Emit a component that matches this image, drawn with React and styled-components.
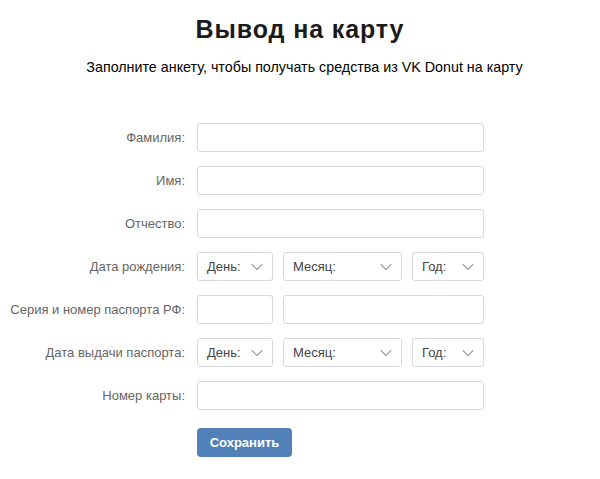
import React from "react";
import styled, { createGlobalStyle } from "styled-components";

const Global = createGlobalStyle`
  html, body { margin: 0; padding: 0; background: #fff; }
  body { font-family: "Liberation Sans", Arial, sans-serif; color: #000; }
  * { box-sizing: border-box; }
`;

const Page = styled.div`
  width: 600px;
  height: 479px;
  display: flex;
  flex-direction: column;
  align-items: center;
  padding-top: 14px;
`;

const Title = styled.h1`
  margin: 0;
  font-size: 25px;
  letter-spacing: 0.9px;
  font-weight: 700;
  line-height: 30px;
  color: #1a1a1a;
`;

const Subtitle = styled.p`
  margin: 14px 0 0 9px;
  font-size: 14.3px;
  line-height: 18px;
  color: #000;
`;

const Form = styled.div`
  margin-top: 47px;
  align-self: stretch;
  display: grid;
  grid-template-columns: 185px 287px;
  column-gap: 12px;
  row-gap: 14px;
  align-items: center;
`;

const Label = styled.div`
  text-align: right;
  font-size: 13px;
  color: #656565;
`;

const Fields = styled.div`
  display: flex;
  gap: ${(p) => p.$gap || 10}px;
`;

const Input = styled.div`
  width: ${(p) => (p.$w ? `${p.$w}px` : "100%")};
  height: 29px;
  border: 1px solid #d6dade;
  border-radius: 3px;
  background: #fff;
`;

const Select = styled.div`
  width: ${(p) => p.$w}px;
  height: 29px;
  border: 1px solid #d6dade;
  border-radius: 3px;
  display: flex;
  align-items: center;
  justify-content: space-between;
  padding: 0 9px 0 9px;
  font-size: 13px;
  color: #444;
`;

const Chevron = () => (
  <svg width="12" height="8" viewBox="0 0 12 8" fill="none">
    <path d="M1 1.5l5 5 5-5" stroke="#99a0a8" strokeWidth="1.1" strokeLinecap="round" strokeLinejoin="round" />
  </svg>
);

const Button = styled.button`
  grid-column: 2;
  justify-self: start;
  margin-top: 4px;
  width: 95px;
  height: 29px;
  border: none;
  border-radius: 4px;
  background: #5181b8;
  color: #fff;
  font-family: "Liberation Sans", Arial, sans-serif;
  font-size: 13px;
  font-weight: 700;
  padding: 0;
`;

const DateFields = () => (
  <Fields $gap={10}>
    <Select $w={76}>День: <Chevron /></Select>
    <Select $w={119}>Месяц: <Chevron /></Select>
    <Select $w={72}>Год: <Chevron /></Select>
  </Fields>
);

export default function App() {
  return (
    <Page>
      <Global />
      <Title>Вывод на карту</Title>
      <Subtitle>Заполните анкету, чтобы получать средства из VK Donut на карту</Subtitle>
      <Form>
        <Label>Фамилия:</Label>
        <Input />
        <Label>Имя:</Label>
        <Input />
        <Label>Отчество:</Label>
        <Input />
        <Label>Дата рождения:</Label>
        <DateFields />
        <Label>Серия и номер паспорта РФ:</Label>
        <Fields $gap={10}>
          <Input $w={76} />
          <Input $w={201} />
        </Fields>
        <Label>Дата выдачи паспорта:</Label>
        <DateFields />
        <Label>Номер карты:</Label>
        <Input />
        <Button>Сохранить</Button>
      </Form>
    </Page>
  );
}
